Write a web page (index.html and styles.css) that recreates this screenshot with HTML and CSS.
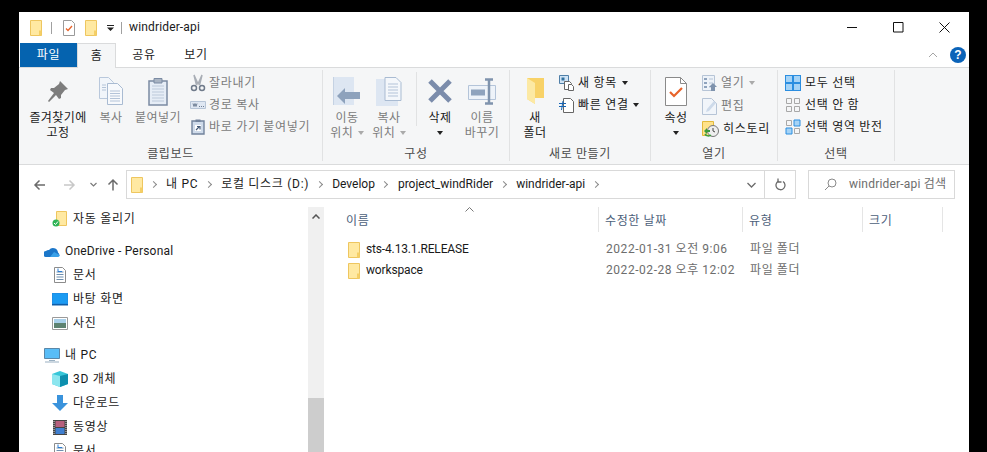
FILE: index.html
```html
<!DOCTYPE html>
<html lang="ko">
<head>
<meta charset="utf-8">
<title>windrider-api</title>
<link rel="stylesheet" href="styles.css">
</head>
<body>
<svg class="defs" width="0" height="0">
  <symbol id="folder" viewBox="0 0 12 16"><path d="M.5.5h11v15H.5z" fill="#ffe9a2" stroke="#eec65f"/><path d="M9 10.5h2.500v5H9z" fill="#f5cf66"/></symbol>
  <symbol id="doc" viewBox="0 0 14 16"><path d="M1.500.5h8l3 3v12h-11z" fill="#fff" stroke="#8c8c8c"/><path d="M3.500 5h7M3.500 7.500h7M3.500 10h7M3.500 12.500h7" stroke="#6f8fae"/><path d="M5 1.500v3h4" stroke="#2b7cd3" fill="none"/></symbol>
  <symbol id="page" viewBox="0 0 24 28"><path d="M.5.5h9l5 5v16H.5z" fill="#f1f5fa" stroke="#b9c8dc"/><path d="M8.500 6.500h10l5 5v16h-15z" fill="#f7f9fc" stroke="#a9bbd2"/><path d="M11 14h10M11 16.500h10M11 19h10M11 21.500h10M11 24h10M3 8h4M3 10.500h4M3 13h4" stroke="#b3c3d8"/></symbol>
</svg>

<main class="window">
  <header class="titlebar">
    <svg class="ic-folder" width="12" height="16"><use href="#folder"/></svg>
    <span class="vline vline-a"></span>
    <svg class="ic-check" width="12" height="16" viewBox="0 0 12 16"><path d="M.5.5h8l3 3v12H.5z" fill="#fff" stroke="#9a9a9a"/><path d="M3 8.500l2 2 4-4.500" fill="none" stroke="#e8632a" stroke-width="1.300"/></svg>
    <svg class="ic-folder2" width="12" height="16"><use href="#folder"/></svg>
    <svg class="ic-qat" width="8" height="6" viewBox="0 0 8 6"><path d="M0 0h7v1H0zM0 2.500h7L3.500 6z" fill="#222"/></svg>
    <span class="vline vline-b"></span>
    <span class="title-text">windrider-api</span>
    <div class="win-controls">
      <svg width="11" height="11" viewBox="0 0 11 11"><path d="M0 5.500h10" stroke="#111"/></svg>
      <svg width="11" height="11" viewBox="0 0 11 11"><path d="M.5.500h9.500v9.500H.5z" fill="none" stroke="#111"/></svg>
      <svg width="11" height="11" viewBox="0 0 11 11"><path d="M.5.500l10 10M10.500.500l-10 10" stroke="#111" fill="none"/></svg>
    </div>
  </header>

  <nav class="tabs">
    <span class="tab tab-file">파일</span>
    <span class="tab tab-home">홈</span>
    <span class="tab tab-share">공유</span>
    <span class="tab tab-view">보기</span>
    <div class="tab-right">
      <svg width="10" height="6" viewBox="0 0 10 6"><path d="M1 5l4-4 4 4" fill="none" stroke="#a5a5a5"/></svg>
      <span class="help">?</span>
    </div>
  </nav>

  <section class="ribbon">
    <div class="group g1">
      <div class="group-body">
        <div class="big w-pin">
          <div class="big-ic"><svg width="22" height="22" viewBox="0 0 22 22"><path d="M13 1l8 8-3 1-4 5 0 3-2 1-3-4-7 7-1-1 6-8-4-3 1-2h3l5-4z" fill="#7d7d7d"/></svg></div>
          <span>즐겨찾기에<br>고정</span>
        </div>
        <div class="big w-copy muted">
          <div class="big-ic"><svg width="24" height="28"><use href="#page"/></svg></div>
          <span>복사</span>
        </div>
        <div class="big w-paste muted">
          <div class="big-ic"><svg width="20" height="29" viewBox="0 0 20 29"><path d="M1 4h18v24H1z" fill="#e6edf6" stroke="#7b8ba3" stroke-width="1.500"/><path d="M6 1.500h8V6H6z" fill="#a9b4c3" stroke="#7b8ba3"/><path d="M4 9h12M4 12h12M4 15h12M4 18h12M4 21h12M4 24h12" stroke="#bcc9da"/></svg></div>
          <span>붙여넣기</span>
        </div>
        <div class="small-col ml8 muted">
          <div class="small"><svg width="16" height="18" viewBox="0 0 16 18"><path d="M4 1l4 9 4-9-2.500 10M4 1l2.500 10" fill="none" stroke="#a8adb5" stroke-width="1.500"/><circle cx="4" cy="14" r="2.500" fill="none" stroke="#6f7a8a" stroke-width="1.500"/><circle cx="12" cy="14" r="2.500" fill="none" stroke="#6f7a8a" stroke-width="1.500"/></svg><span>잘라내기</span></div>
          <div class="small"><svg width="16" height="10" viewBox="0 0 16 10"><path d="M.5 1.500h15v7H.5z" fill="#dfe7f2" stroke="#b6c4d6"/><path d="M3 3.500l1 3 1-3 1 3 1-3M9 6.500h1M11 6.500h1M13 6.500h1" stroke="#6f7f95" fill="none"/></svg><span>경로 복사</span></div>
          <div class="small"><svg width="16" height="16" viewBox="0 0 16 16"><path d="M2 2h12v13H2z" fill="#cfdbea" stroke="#72839c" stroke-width="1.400"/><path d="M5.500.5h5V3h-5z" fill="#72839c"/><path d="M5 6h6v6H5z" fill="#fff"/><path d="M6 11l3-3M7 7.500h3v3" stroke="#445a78" fill="none" stroke-width="1.200"/></svg><span>바로 가기 붙여넣기</span></div>
        </div>
      </div>
      <div class="group-label">클립보드</div>
    </div>

    <div class="group g2">
      <div class="group-body">
        <div class="big w42 muted">
          <div class="big-ic"><svg width="28" height="29" viewBox="0 0 28 29"><path d="M0 0h21v28H0z" fill="#dde6f2"/><path d="M0 0h1v28H0z" fill="#c5d2e3"/><path d="M4 19l8-8v4h15v7H12v5z" fill="#8ea2bc"/></svg></div>
          <span>이동<br>위치 <i class="caret light"></i></span>
        </div>
        <div class="big w42 muted">
          <div class="big-ic"><svg width="26" height="29" viewBox="0 0 26 29"><path d="M0 2h22v27H0z" fill="#dde6f2"/><path d="M9 .5h11l5 5v18H9z" fill="#f4f7fb" stroke="#a9bbd2"/><path d="M12 7h10M12 10h10M12 13h10M12 16h10M12 19h10" stroke="#b3c3d8"/></svg></div>
          <span>복사<br>위치 <i class="caret light"></i></span>
        </div>
        <span class="inner-sep"></span>
        <div class="big w42">
          <div class="big-ic"><svg width="26" height="26" viewBox="0 0 26 26"><path d="M3 3l20 20M23 3L3 23" stroke="#7b8cab" stroke-width="5"/></svg></div>
          <span>삭제<br><i class="caret"></i></span>
        </div>
        <div class="big w42 muted">
          <div class="big-ic"><svg width="28" height="27" viewBox="0 0 28 27"><path d="M.5 7.500h27v14H.5z" fill="#eef3f9" stroke="#b4c4d9"/><path d="M3 11.500h14v6H3z" fill="#8fa3bd"/><path d="M17 1.500h8M17 25.500h8M21 2v23" stroke="#7f93ad" stroke-width="2.500"/></svg></div>
          <span>이름<br>바꾸기</span>
        </div>
      </div>
      <div class="group-label">구성</div>
    </div>

    <div class="group g3">
      <div class="group-body">
        <div class="big w40">
          <div class="big-ic"><svg width="19" height="28" viewBox="0 0 19 28"><path d="M1 1h17v20H9v6L1 22z" fill="#ffd96f"/><path d="M9 6L1 1h17v20H9z" fill="#f8d268"/><path d="M1 1l8 5v21l-8-5z" fill="#fce9a4"/></svg></div>
          <span>새<br>폴더</span>
        </div>
        <div class="small-col ml4">
          <div class="small"><svg width="16" height="16" viewBox="0 0 16 16"><path d="M.5.5h9v8h-9z" fill="#cfe3f5" stroke="#4f7fa8"/><path d="M2.500 2.500h3v3h-3z" fill="#31709f"/><path d="M5.500 6.500h5l2 2v6h-7z" fill="#fff" stroke="#666"/><path d="M9.500 9.500h3l2 2v4h-5z" fill="#fff" stroke="#666"/></svg><span class="txt">새 항목 <i class="caret"></i></span></div>
          <div class="small"><svg width="16" height="16" viewBox="0 0 16 16"><path d="M4.500 1.500h7l3 3v11h-10z" fill="#fff" stroke="#666"/><path d="M0 6.500h7M0 9.500h7M4 4l-1.500 9" stroke="#1565b5" fill="none"/></svg><span class="txt">빠른 연결 <i class="caret"></i></span></div>
        </div>
      </div>
      <div class="group-label">새로 만들기</div>
    </div>

    <div class="group g4">
      <div class="group-body">
        <div class="big w40">
          <div class="big-ic"><svg width="22" height="29" viewBox="0 0 22 29"><path d="M.5.500h15l6 6v22H.5z" fill="#fff" stroke="#8a8a8a"/><path d="M15.500.5v6h6" fill="none" stroke="#8a8a8a"/><path d="M5 15l4 4 8-8" fill="none" stroke="#e8632a" stroke-width="2.200"/></svg></div>
          <span>속성<br><i class="caret"></i></span>
        </div>
        <div class="small-col ml6 rows-open">
          <div class="small muted"><svg width="16" height="16" viewBox="0 0 16 16"><path d="M.5.500h12v15H.5z" fill="#eef3f9" stroke="#b6c4d6"/><path d="M2 3h3v2H2zM2 7h3v2H2zM2 11h3v2H2z" fill="#8fa3bd"/><path d="M7 4h4M7 8h4M7 12h4" stroke="#b6c4d6"/><path d="M9 16v-4H7l4-4 4 4h-2v4z" fill="#7f93ad"/></svg><span class="txt">열기 <i class="caret light"></i></span></div>
          <div class="small muted"><svg width="16" height="17" viewBox="0 0 16 17"><path d="M.5.500h9l5 5v11H.5z" fill="#f1f5fa" stroke="#b6c4d6"/><path d="M4 14l1-3 7-8 2 2-7 8z" fill="#cddaea"/></svg><span>편집</span></div>
          <div class="small"><svg width="18" height="16" viewBox="0 0 18 16"><path d="M.5.500h11v14H.5z" fill="#ffe28a" stroke="#e2b93c"/><circle cx="11" cy="10" r="5.500" fill="#eee" stroke="#777"/><path d="M11 7v3l2 1" stroke="#444" fill="none"/><path d="M2 10l3-3v2h3v2H5v2z" fill="#3b9b3b"/><path d="M3 13a4 4 0 0 0 6 1" stroke="#3b9b3b" stroke-width="1.500" fill="none"/></svg><span>히스토리</span></div>
        </div>
      </div>
      <div class="group-label">열기</div>
    </div>

    <div class="group g5">
      <div class="group-body">
        <div class="small-col sel">
          <div class="small"><svg width="16" height="16" viewBox="0 0 16 16"><path d="M0 0h16v16H0z" fill="#2b8ee0"/><path d="M1 1h6v6H1zM9 1h6v6H9zM1 9h6v6H1zM9 9h6v6H9z" fill="#a5d3f6"/></svg><span>모두 선택</span></div>
          <div class="small"><svg width="16" height="16" viewBox="0 0 16 16"><path d="M1.500 1.500h5v5h-5zM9.500 1.500h5v5h-5zM1.500 9.500h5v5h-5zM9.500 9.500h5v5h-5z" fill="none" stroke="#a8a8a8"/></svg><span>선택 안 함</span></div>
          <div class="small"><svg width="16" height="16" viewBox="0 0 16 16"><path d="M1.500 1.500h5v5h-5zM9.500 9.500h5v5h-5z" fill="none" stroke="#a8a8a8"/><path d="M9 1h6v6H9zM1 9h6v6H1z" fill="#a5d3f6" stroke="#2b8ee0"/></svg><span>선택 영역 반전</span></div>
        </div>
      </div>
      <div class="group-label">선택</div>
    </div>
  </section>

  <div class="addressrow">
    <div class="navbtns">
      <svg class="n-back" width="13" height="12" viewBox="0 0 13 12"><path d="M12 6H2M6.500 1.500L2 6l4.500 4.500" fill="none" stroke="#6b6b6b" stroke-width="1.500"/></svg>
      <svg class="n-fwd" width="13" height="12" viewBox="0 0 13 12"><path d="M1 6h10M6.500 1.500L11 6l-4.500 4.500" fill="none" stroke="#c8c8c8" stroke-width="1.500"/></svg>
      <svg class="n-drop" width="7" height="5" viewBox="0 0 7 5"><path d="M.5 1l3 3 3-3" fill="none" stroke="#7a7a7a" stroke-width="1.200"/></svg>
      <svg class="n-up" width="12" height="13" viewBox="0 0 12 13"><path d="M6 12.500V2M1.500 6.500L6 2l4.500 4.500" fill="none" stroke="#6b6b6b" stroke-width="1.500"/></svg>
    </div>
    <div class="addressbar">
      <svg class="crumb-folder" width="12" height="16"><use href="#folder"/></svg>
      <i class="chev"></i><span class="ko">내 PC</span>
      <i class="chev"></i><span class="ko">로컬 디스크 (D:)</span>
      <i class="chev"></i><span>Develop</span>
      <i class="chev"></i><span>project_windRider</span>
      <i class="chev"></i><span>windrider-api</span>
      <i class="chev"></i>
      <div class="addr-end">
        <svg class="addr-drop" width="9" height="6" viewBox="0 0 9 6"><path d="M.5 1l4 4 4-4" fill="none" stroke="#6b6b6b" stroke-width="1.300"/></svg>
        <span class="addr-refresh"><svg width="11" height="13" viewBox="0 0 11 13"><path d="M3.500 3.200A4.500 4.500 0 1 0 8 3.500" fill="none" stroke="#6b6b6b" stroke-width="1.300"/><path d="M3 .5v3.500h3.500" fill="none" stroke="#6b6b6b" stroke-width="1.300"/></svg></span>
      </div>
    </div>
    <div class="searchbox">
      <svg width="13" height="13" viewBox="0 0 13 13"><circle cx="8" cy="5" r="4" fill="none" stroke="#8a8a8a"/><path d="M5 8l-4 4" stroke="#8a8a8a"/></svg>
      <span>windrider-api 검색</span>
    </div>
  </div>

  <div class="content">
    <aside class="sidebar">
      <div class="tree">
        <div class="row child ko"><svg width="16" height="16" viewBox="0 0 16 16"><path d="M4.500.5h10v14h-10z" fill="#ffe9a2" stroke="#eec65f"/><circle cx="4" cy="12" r="3.500" fill="#2fb457"/><path d="M2 12l1.500 1.500L6 10.500" stroke="#fff" fill="none"/></svg><span>자동 올리기</span></div>
        <div class="row root gap od"><svg width="16" height="11" viewBox="0 0 16 11"><path d="M2 5a4 4 0 0 1 3-1 5 5 0 0 1 9 2.500A2.500 2.500 0 0 1 13.500 11H2.500A2.800 2.800 0 0 1 2 5z" fill="#1b76c9"/><path d="M6 11l4-5 6 3a2.500 2.500 0 0 1-2.500 2z" fill="#39a0e8"/></svg><span>OneDrive - Personal</span></div>
        <div class="row child ko"><svg width="14" height="16"><use href="#doc"/></svg><span>문서</span></div>
        <div class="row child ko"><svg width="16" height="13" viewBox="0 0 16 13"><path d="M0 0h16v12H0z" fill="#1e8fe6"/><path d="M1 1h14v9H1z" fill="#1b9bf2"/><path d="M0 11h16v1.500H0z" fill="#0f5ea8"/></svg><span>바탕 화면</span></div>
        <div class="row child ko"><svg width="16" height="13" viewBox="0 0 16 13"><path d="M.5.500h15v12H.5z" fill="#fff" stroke="#9a9a9a"/><path d="M2 2h12v4H2z" fill="#a8d0ea"/><path d="M2 6h12v5H2z" fill="#5d8270"/></svg><span>사진</span></div>
        <div class="row root gap ko"><svg width="16" height="15" viewBox="0 0 16 15"><path d="M.5.500h15v10H.5z" fill="#59bdf7" stroke="#5a87a8"/><path d="M5 12h6v1H5zM1 13.500h14v1H1z" fill="#9ab0c2"/></svg><span>내 PC</span></div>
        <div class="row child ko"><svg width="16" height="16" viewBox="0 0 16 16"><path d="M8 0l8 3v10l-8 3-8-3V3z" fill="#37c6d8"/><path d="M8 5l8-2v10l-8 3z" fill="#0d8fae"/><path d="M0 3l8 2v11l-8-3z" fill="#8ce6ef"/></svg><span>3D 개체</span></div>
        <div class="row child ko"><svg width="16" height="16" viewBox="0 0 16 16"><path d="M5 0h6v8h5l-8 8-8-8h5z" fill="#3a93dc"/></svg><span>다운로드</span></div>
        <div class="row child ko"><svg width="14" height="15" viewBox="0 0 14 15"><path d="M0 0h14v15H0z" fill="#444"/><path d="M2.500 1h9v6h-9z" fill="#b65f7d"/><path d="M2.500 8h9v6h-9z" fill="#3f7fd0"/><path d="M1 1v13M13 1v13" stroke="#ddd" stroke-dasharray="1 1"/></svg><span>동영상</span></div>
        <div class="row child ko"><svg width="14" height="16"><use href="#doc"/></svg><span>문서</span></div>
      </div>
      <div class="scrollbar">
        <svg width="8" height="5" viewBox="0 0 8 5"><path d="M.5 4.500L4 1l3.500 3.500" fill="none" stroke="#555" stroke-width="1.500"/></svg>
        <div class="thumb"></div>
      </div>
    </aside>
    <section class="files">
      <div class="sort-caret"><svg width="9" height="5" viewBox="0 0 9 5"><path d="M.5 4.500l4-4 4 4" fill="none" stroke="#777"/></svg></div>
      <div class="headers">
        <span class="h-name">이름</span>
        <span class="h-date">수정한 날짜</span>
        <span class="h-type">유형</span>
        <span class="h-size">크기</span>
      </div>
      <div class="file">
        <span class="c-name"><svg width="12" height="16"><use href="#folder"/></svg>sts-4.13.1.RELEASE</span>
        <span class="c-date">2022-01-31 오전 9:06</span>
        <span class="c-type">파일 폴더</span>
      </div>
      <div class="file">
        <span class="c-name"><svg width="12" height="16"><use href="#folder"/></svg>workspace</span>
        <span class="c-date">2022-02-28 오후 12:02</span>
        <span class="c-type">파일 폴더</span>
      </div>
    </section>
  </div>
</main>
</body>
</html>
```

FILE: styles.css
```css
* { box-sizing: border-box; }
html, body { margin: 0; height: 452px; overflow: hidden; background: #000; }
body { font: 12px/15px Roboto, "Noto Sans CJK KR", sans-serif; color: #1a1a1a; }
svg { display: block; flex: none; }
.defs { position: absolute; }

.window { width: 950px; height: 440px; margin: 12px 0 0 19px; background: #fff; display: flex; flex-direction: column; overflow: hidden; }

/* title bar */
.titlebar { height: 31px; flex: none; display: flex; align-items: center; }
.ic-folder { margin-left: 11px; }
.vline { width: 1px; height: 12px; background: #a0a0a0; }
.vline-a { margin-left: 9px; }
.ic-check { margin-left: 11px; }
.ic-folder2 { margin-left: 10px; }
.ic-qat { margin-left: 10px; }
.vline-b { margin-left: 6px; }
.title-text { margin-left: 7px; letter-spacing: .15px; }
.win-controls { margin-left: auto; margin-right: 19px; display: flex; gap: 35px; }

/* tabs */
.tabs { height: 25px; flex: none; display: flex; border-bottom: 1px solid #dadbdc; position: relative; }
.tab { text-align: center; line-height: 25px; letter-spacing: .6px; }
.tab-file { width: 57px; margin-left: 1px; height: 24px; background: #0563af; color: #fff; }
.tab-home { width: 39px; height: 25px; background: #f5f6f7; border: 1px solid #dadbdc; border-bottom: 0; }
.tab-share { width: 52px; margin-left: 2px; }
.tab-view { width: 52px; }
.tab-right { margin-left: auto; margin-right: 3px; display: flex; align-items: center; gap: 12px; height: 24px; }
.help { width: 16px; height: 16px; border-radius: 50%; background: #0b63b8; color: #fff; font: 700 12px/16px "Liberation Sans", sans-serif; text-align: center; }

/* ribbon */
.ribbon { height: 97px; flex: none; background: #f5f6f7; border-bottom: 1px solid #dadbdc; padding-top: 2px; display: flex; }
.group { height: 91px; flex: none; border-right: 1px solid #e1e2e3; display: flex; flex-direction: column; }
.g1 { width: 304px; }
.g2 { width: 187px; }
.g3 { width: 141px; }
.g4 { width: 127px; }
.g5 { width: 117px; }
.group-body { height: 76px; flex: none; display: flex; padding-top: 2px; }
.group-label { flex: none; padding-top: 1px; height: 15px; text-align: center; color: #4a4a4a; letter-spacing: .6px; line-height: 15px; }
.g1 .group-body { padding-left: 9px; }
.g2 .group-body { padding-left: 3px; }
.g3 .group-body { padding-left: 5px; }
.g4 .group-body { padding-left: 5px; }
.g5 .group-body { padding-left: 7px; }

.big { display: flex; flex-direction: column; align-items: center; text-align: center; flex: none; letter-spacing: .4px; white-space: nowrap; }
.big-ic { height: 35px; padding-top: 3px; display: flex; align-items: center; justify-content: center; margin-bottom: 4px; }
.w-pin { width: 60px; }
.w-copy { width: 46px; }
.w-paste { width: 48px; }
.w42 { width: 42px; }
.w40 { width: 40px; }
.muted { color: #7b7b7b; }
.inner-sep { width: 1px; height: 54px; background: #e1e2e3; margin: 0 2px 0 6px; flex: none; }

.small-col { display: flex; flex-direction: column; }
.ml8 { margin-left: 8px; }
.ml4 { margin-left: 4px; }
.ml6 { margin-left: 6px; }
.rows-open { gap: 1px; }
.small { height: 22px; display: flex; align-items: center; gap: 3px; white-space: nowrap; letter-spacing: .7px; }
.sel .small { gap: 4px; }

.caret { display: inline-block; width: 0; height: 0; border: 3px solid transparent; border-top: 4px solid #222; border-bottom: 0; vertical-align: 2px; margin-left: 1px; }
.caret.light { border-top-color: #aaa; }

/* address row */
.addressrow { height: 40px; flex: none; display: flex; padding-top: 5px; }
.navbtns { width: 107px; height: 29px; flex: none; display: flex; align-items: center; }
.n-back { margin-left: 14px; }
.n-fwd { margin-left: 17px; }
.n-drop { margin-left: 14px; }
.n-up { margin-left: 10px; }
.addressbar { width: 670px; height: 29px; flex: none; border: 1px solid #d9d9d9; display: flex; align-items: center; gap: 9.5px; padding-left: 4px; white-space: nowrap; }
.ko { letter-spacing: .7px; }
.chev { display: block; width: 4px; height: 7px; flex: none; position: relative; }
.chev::before { content: ""; position: absolute; left: -2px; top: 1px; width: 4px; height: 4px; border-top: 1.500px solid #8a8a8a; border-right: 1.500px solid #8a8a8a; transform: rotate(45deg); }
.addr-end { margin-left: auto; display: flex; align-items: center; height: 100%; }
.addr-drop { margin-right: 8px; }
.addr-refresh { width: 31px; height: 100%; border-left: 1px solid #d9d9d9; display: flex; align-items: center; justify-content: center; }
.searchbox { width: 147px; height: 29px; flex: none; margin-left: 12px; border: 1px solid #d9d9d9; display: flex; align-items: center; gap: 12px; padding-left: 15px; color: #6d6d6d; white-space: nowrap; letter-spacing: .2px; }

/* content */
.content { flex: 1; min-height: 0; display: flex; }
.sidebar { width: 305px; flex: none; display: flex; position: relative; }
.tree { width: 289px; flex: none; padding-top: 2px; overflow: hidden; }
.row { height: 24px; display: flex; align-items: center; white-space: nowrap; }
.row svg { margin-right: 5px; }
.child { padding-left: 33px; }
.root { padding-left: 25px; }
.gap { margin-top: 8px; }
.od { letter-spacing: .2px; }
.child svg[width="14"] { margin-left: 1px; margin-right: 6px; }
.scrollbar { width: 16px; height: 100%; margin-top: 2px; background: #f0f0f0; display: flex; flex-direction: column; align-items: center; padding-top: 7px; position: relative; }
.thumb { position: absolute; left: 0; right: 0; top: 191px; height: 60px; background: #cdcdcd; }

.files { flex: 1; position: relative; min-width: 0; }
.sort-caret { position: absolute; left: 141px; top: 2px; }
.headers { height: 25px; margin-top: 2px; display: flex; color: #4c607a; letter-spacing: .6px; }
.headers span { height: 25px; line-height: 28px; border-right: 1px solid #e5e5e5; padding-left: 22px; flex: none; }
.h-name { width: 275px; }
.h-date { width: 144px; padding-left: 6px !important; }
.h-type { width: 120px; padding-left: 6px !important; }
.h-size { width: 80px; padding-left: 6px !important; }
.file { height: 21px; display: flex; align-items: center; }
.headers + .file { margin-top: 7px; }
.c-name { width: 275px; padding-left: 24px; display: flex; align-items: center; gap: 6px; letter-spacing: -.15px; }
.c-date { width: 144px; padding-left: 7px; color: #6d6d6d; letter-spacing: .55px; white-space: nowrap; }
.c-type { padding-left: 7px; color: #6d6d6d; letter-spacing: .6px; }
```
